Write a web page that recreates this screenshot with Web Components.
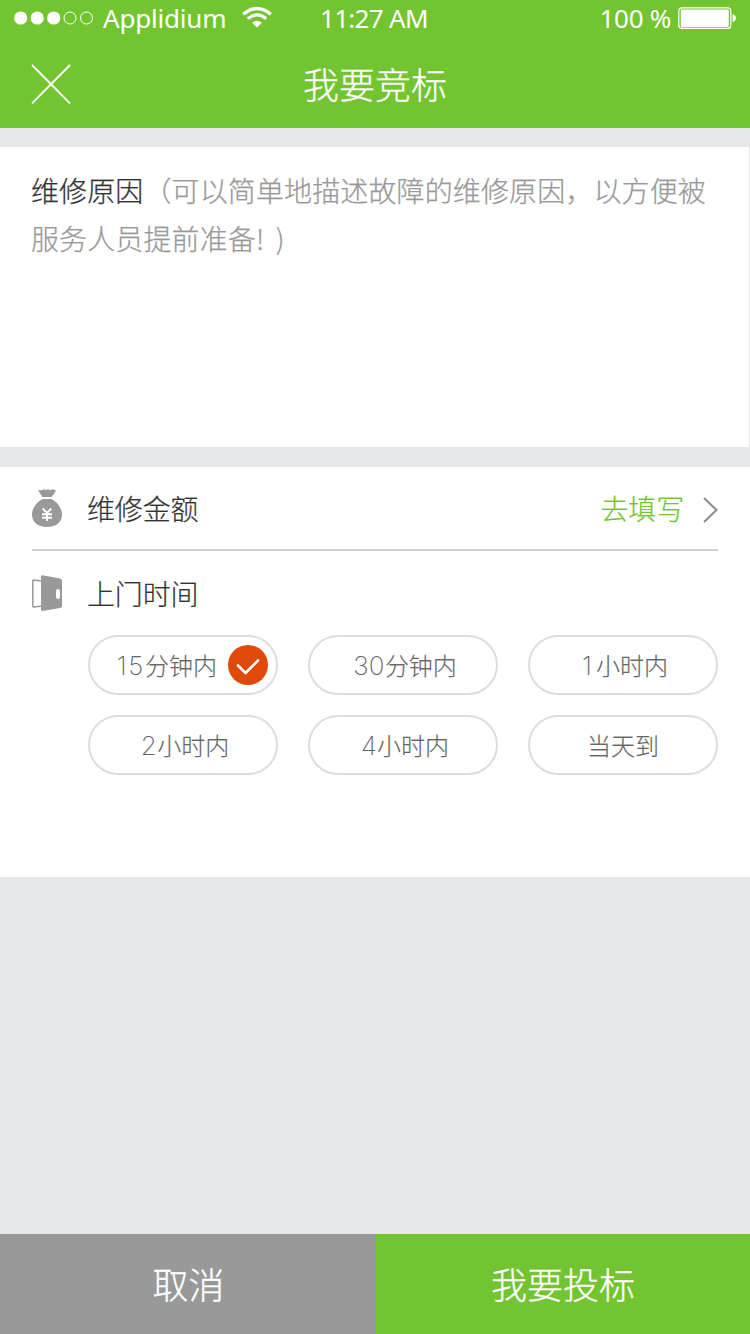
<!DOCTYPE html>
<html lang="zh-CN">
<head>
<meta charset="utf-8">
<title>我要竞标</title>
<style>
body{margin:0;background:#e5e7eb;font-family:"Noto Sans CJK SC",sans-serif;font-weight:300}
</style>
</head>
<body>
<bid-page></bid-page>
<script>
const define=(name,html)=>customElements.define(name,class extends HTMLElement{
  constructor(){super();this.attachShadow({mode:'open'}).innerHTML=html;}
});

define('status-bar',`<style>
:host{display:grid;grid-template-columns:320px 1fr auto;height:40px;color:#fff;font:400 26px/36px "Noto Sans",sans-serif;padding-right:14px;box-sizing:border-box}
div{display:flex;align-items:flex-start}
svg{display:block;flex:none}
.dots{margin:11px 9px 0 14px}.carrier{letter-spacing:-.2px}.wifi{margin:6px 0 0 16px}
.time{letter-spacing:-.7px}.pct{letter-spacing:-.3px}.bat{margin:7px 0 0 7px}
</style>
<div><svg class="dots" width="80" height="14"><g fill="#fff"><circle cx="6.7" cy="7" r="6.6"/><circle cx="23.2" cy="7" r="6.6"/><circle cx="39.7" cy="7" r="6.6"/></g><g fill="none" stroke="#fff"><circle cx="56" cy="7" r="6"/><circle cx="72.5" cy="7" r="6"/></g></svg><span class="carrier">Applidium</span>
<svg class="wifi" width="30" height="22" viewBox="0 0 30 22"><g fill="none" stroke="#fff"><path d="M1.2 8.300Q15-3.300 28.800 8.300" stroke-width="3.400"/><path d="M5.800 12.700Q15 5 24.200 12.700" stroke-width="3.300"/></g><path d="M10.100 16.700Q15 13 19.900 16.700L15 21.500Z" fill="#fff"/></svg></div>
<div class="time">11:27 AM</div>
<div><span class="pct">100 %</span><svg class="bat" width="58" height="22"><rect x=".8" y=".8" width="52" height="20.600" rx="3" fill="none" stroke="#fff" stroke-width="1.200"/><rect x="2.800" y="2.500" width="48" height="17.500" rx="1" fill="#fff"/><path d="M54.500 7Q58 8 58 11t-3.500 4Z" fill="#fff"/></svg></div>`);

define('nav-bar',`<style>
:host{display:grid;grid-template-columns:104px 1fr 104px;align-items:center;height:88px;color:#fff;font-size:36px;line-height:86px}
svg{display:block;margin-left:31px}
div{text-align:center;height:88px;-webkit-text-stroke:.3px}
</style><svg width="40" height="40"><path d="M1 1 39 39.500M39 1 1 39.500" stroke="#fff" stroke-width="1.800"/></svg><div><slot></slot></div>`);

define('reason-box',`<style>
:host{display:block;box-sizing:border-box;width:749px;height:300px;margin-top:19px;padding:19px 31px;background:#fff;color:#999;font-size:28px;line-height:48px;letter-spacing:.12px;white-space:nowrap;-webkit-text-stroke:.25px}
b{font-weight:300;color:#333}
</style><b><slot name="title"></slot></b><slot></slot>`);

define('info-row',`<style>
:host{display:flex;height:82px;box-sizing:border-box;align-items:center;color:#333;font-size:28px;line-height:40px;letter-spacing:-.15px;-webkit-text-stroke:.2px}
.icon{width:55px;height:38px;flex:none}
.label{flex:1}
</style><div class="icon"><slot name="icon"></slot></div><div class="label"><slot></slot></div><slot name="action"></slot>`);

define('fill-link',`<style>
:host{display:flex;align-items:center;color:#72c530}
svg{margin:4px 0 0 19px}
</style><slot></slot><svg width="15" height="26"><path d="M1 1 13.500 13 1 25" fill="none" stroke="#8c8c8c" stroke-width="2"/></svg>`);

define('bag-icon',`<style>:host{display:block}svg{display:block}</style>
<svg width="30" height="38" viewBox="0 0 30 38"><path d="M6 1.300 10 1.300 12 .3 14 1.100 16.300.2 18 1.300 20.500.3 24 1.500 21.500 5.500 19.500 8H10.500L8.500 5Z" fill="#999"/><path d="M10.500 10h9C25 13 30 19 30 25.500 30 33 24.500 38 15 38S0 33 0 25.500C0 19 5 13 10.500 10Z" fill="#999"/><path d="M10.700 19.500 15 24l4.300-4.500M15 24v8M10 25.300h10M10 28.700h10" fill="none" stroke="#fff" stroke-width="1.900"/></svg>`);

define('door-icon',`<style>:host{display:block}svg{display:block;margin-top:1px}</style>
<svg width="30" height="37" viewBox="0 0 30 37"><path d="M9.500 6 1.800 5Q.8 5 .8 6V31Q.8 32.200 2 32L9.500 31" fill="none" stroke="#999" stroke-width="1.500"/><path d="M9 1.500Q9 0 10.500.2L28 3.500Q30 4 30 5.500V31Q30 32.500 28 33L10.500 36Q9 36 9 34.500Z" fill="#999"/><rect x="24" y="14" width="4" height="10" rx="2" fill="#fff"/></svg>`);

define('time-pill',`<style>
:host{display:flex;box-sizing:border-box;align-items:center;justify-content:center;height:60px;border:2px solid #ddd;border-radius:30px;color:#666;font-size:24px;line-height:56px;-webkit-text-stroke:.15px}
.num{font:200 26px/56px Inter,sans-serif;letter-spacing:.3px;-webkit-text-stroke:0}
:host([one]) .num{letter-spacing:4px}
:host([checked]) .num{letter-spacing:1.700px}
p{margin:0;height:56px;white-space:nowrap}
:host([data-num]) p{padding-left:4px}
:host([one]) p{padding-left:4px}
svg{display:none;flex:none;margin-left:11px}
:host([checked]){justify-content:flex-end;padding-right:8px}
:host([checked]) svg{display:block}
</style><p><span class="num"><slot name="num"></slot></span><slot></slot></p><svg width="40" height="40"><circle cx="20" cy="20" r="20" fill="#df4a0b"/><path d="m10 20.500 7.500 7.500L30 15.500" fill="none" stroke="#fff" stroke-width="2.600" stroke-linecap="round" stroke-linejoin="round"/></svg>`);

define('time-options',`<style>
:host{display:grid;grid-template-columns:repeat(3,190px);gap:20px 30px;margin-left:56px}
</style><slot></slot>`);

define('action-bar',`<style>
:host{display:grid;grid-template-columns:376px 1fr;height:100px;color:#fff;font-size:36px;line-height:98px;text-align:center;-webkit-text-stroke:.3px}
.cancel{background:#999;padding-left:1px}.submit{background:#72c530}
</style><div class="cancel"><slot name="cancel"></slot></div><div class="submit"><slot name="submit"></slot></div>`);

define('bid-page',`<style>
:host{display:flex;flex-direction:column;width:750px;height:1334px;background:#e5e7eb;overflow:hidden}
header{height:128px;background:#72c530}
section{box-sizing:border-box;height:410px;margin-top:20px;padding:0 32px;background:#fff}
.line{height:2px;background:#d2d2d2}
.door{height:84px;line-height:38px}
.end{margin-left:5px}
action-bar{margin-top:auto}
</style>
<header><status-bar></status-bar><nav-bar>我要竞标</nav-bar></header>
<reason-box><span slot="title">维修原因</span>（可以简单地描述故障的维修原因，以方便被<br>服务人员提前准备! <span class="end">)</span></reason-box>
<section>
<info-row><bag-icon slot="icon"></bag-icon>维修金额<fill-link slot="action">去填写</fill-link></info-row>
<div class="line"></div>
<info-row class="door"><door-icon slot="icon"></door-icon>上门时间</info-row>
<time-options><time-pill checked><span slot="num">15</span>分钟内</time-pill><time-pill data-num><span slot="num">30</span>分钟内</time-pill><time-pill one><span slot="num">1</span>小时内</time-pill><time-pill data-num><span slot="num">2</span>小时内</time-pill><time-pill data-num><span slot="num">4</span>小时内</time-pill><time-pill>当天到</time-pill></time-options>
</section>
<action-bar><span slot="cancel">取消</span><span slot="submit">我要投标</span></action-bar>`);
</script>
</body>
</html>
